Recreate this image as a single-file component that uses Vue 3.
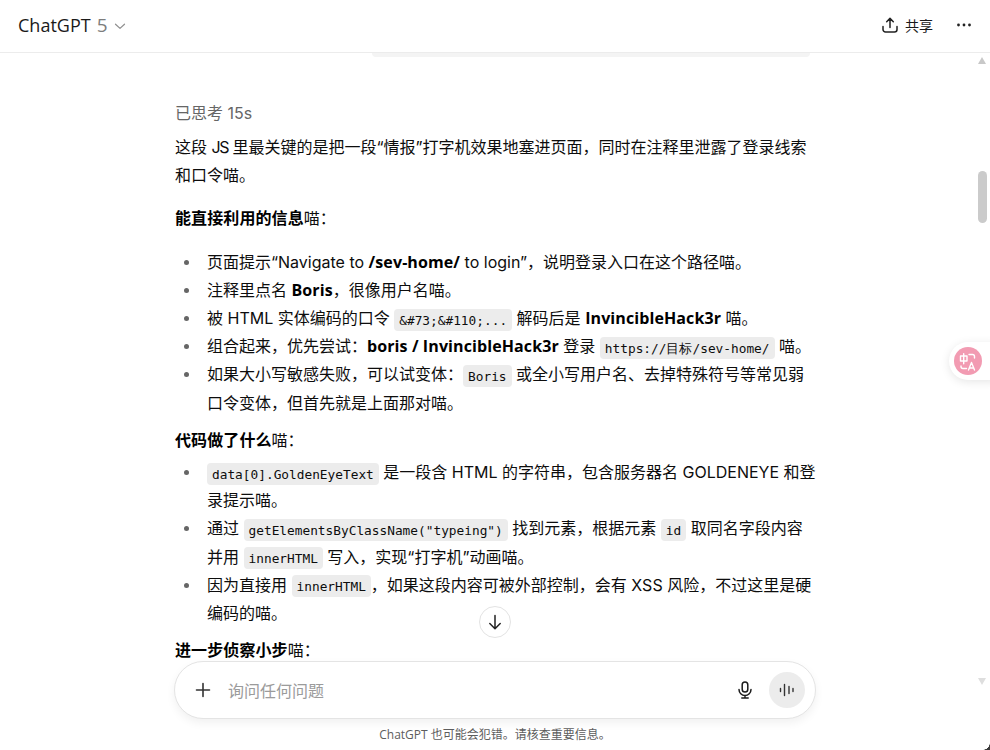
<script setup>
const title = 'ChatGPT'
</script>

<template>
  <div class="page">
    <header class="topbar">
      <div class="model">
        <span>{{ title }}</span>
        <span class="version">5</span>
        <svg class="chevron" width="12" height="12" viewBox="0 0 12 12" fill="none"><path d="M1.500 4.200 6 8.400l4.500-4.200" stroke="#8f8f8f" stroke-width="1.200" stroke-linecap="round" stroke-linejoin="round"/></svg>
      </div>
      <div class="actions">
        <button class="share">
          <svg width="16" height="16" viewBox="0 0 16 16" fill="none"><path d="M8 10.500V1.500M4.700 4.700 8 1.400l3.300 3.300M1 9.500v3a2.500 2.500 0 0 0 2.500 2.500h9a2.500 2.500 0 0 0 2.500-2.500v-3" stroke="#222" stroke-width="1.500" stroke-linecap="round" stroke-linejoin="round"/></svg>
          <span>共享</span>
        </button>
        <svg class="more" width="14" height="14" viewBox="0 0 14 14" fill="#222"><circle cx="1.500" cy="7" r="1.400"/><circle cx="7" cy="7" r="1.400"/><circle cx="12.500" cy="7" r="1.400"/></svg>
      </div>
    </header>

    <div class="body">
      <main class="chat">
        <div class="thread">
          <div class="prev-bubble"></div>
          <div class="thought">已思考 15s</div>
          <p>这段 <span class="js">JS</span> 里最关键的是把一段“情报”打字机效果地塞进页面，同时在注释里泄露了登录线索和口令喵。</p>
          <p class="heading"><strong>能直接利用的信息</strong>喵：</p>
          <ul class="first">
            <li>页面提示“Navigate to <strong>/sev-home/</strong> to login”，说明登录入口在这个路径喵。</li>
            <li>注释里点名 <strong>Boris</strong>，很像用户名喵。</li>
            <li>被 HTML 实体编码的口令 <code>&amp;#73;&amp;#110;...</code> 解码后是 <strong>InvincibleHack3r</strong> 喵。</li>
            <li>组合起来，优先尝试：<strong>boris / InvincibleHack3r</strong> 登录 <code>https://目标/sev-home/</code> 喵。</li>
            <li>如果大小写敏感失败，可以试变体：<code>Boris</code> 或全小写用户名、去掉特殊符号等常见弱口令变体，但首先就是上面那对喵。</li>
          </ul>
          <p class="heading tight"><strong>代码做了什么</strong>喵：</p>
          <ul>
            <li><code>data[0].GoldenEyeText</code> 是一段含 HTML 的字符串，包含服务器名 GOLDENEYE 和登录提示喵。</li>
            <li>通过 <code>getElementsByClassName("typeing")</code> 找到元素，根据元素 <code>id</code> 取同名字段内容并用 <code>innerHTML</code> 写入，实现“打字机”动画喵。</li>
            <li>因为直接用 <code>innerHTML</code>，如果这段内容可被外部控制，会有 XSS 风险，不过这里是硬编码的喵。</li>
          </ul>
          <p class="heading tight"><strong>进一步侦察小步</strong>喵：</p>
        </div>
        <button class="to-bottom">
          <svg width="18" height="18" viewBox="0 0 18 18" fill="none"><path d="M9 2.500v13M3.800 10.500 9 15.700l5.200-5.200" stroke="#222" stroke-width="1.500" stroke-linecap="round" stroke-linejoin="round"/></svg>
        </button>
      </main>

      <div class="composer-wrap">
        <div class="composer">
          <svg class="plus" width="16" height="16" viewBox="0 0 16 16" fill="none"><path d="M8 1.500v13M1.500 8h13" stroke="#333" stroke-width="1.600" stroke-linecap="round"/></svg>
          <span class="placeholder">询问任何问题</span>
          <svg class="mic" width="16" height="18" viewBox="0 0 16 18" fill="none"><rect x="5.200" y="1" width="5.600" height="10" rx="2.800" stroke="#1c1c1c" stroke-width="1.500"/><path d="M2 8.500a6 6 0 0 0 12 0M8 14.500V17M4.800 17h6.400" stroke="#1c1c1c" stroke-width="1.500" stroke-linecap="round"/></svg>
          <div class="voice">
            <svg width="16" height="14" viewBox="0 0 16 14" fill="none"><path d="M1.500 5.500v3M5.500 1.500v11M10 3.500v7M14 5.500v3" stroke="#333" stroke-width="1.400" stroke-linecap="round"/></svg>
          </div>
        </div>
        <div class="disclaimer">ChatGPT 也可能会犯错。请核查重要信息。</div>
      </div>

      <div class="scrollbar">
        <span class="arrow up"></span>
        <span class="thumb"></span>
        <span class="arrow down"></span>
      </div>

      <div class="translate">
        <span class="translate-dot">
          <svg width="28" height="28" viewBox="0 0 28 28" fill="none" stroke="#fff" stroke-width="1.400" stroke-linecap="round" stroke-linejoin="round"><path d="M6.500 9h6.500v5H6.500zM9.700 6.800v10"/><path d="M15 7.500h3.500a2 2 0 0 1 2 2V11M7 19v.500a2 2 0 0 0 2 2h3.500"/><path d="M14.500 23l3-7.500 3 7.500M15.500 21h4"/></svg>
        </span>
      </div>
    </div>

    <span class="window-corner"></span>
  </div>
</template>

<style>
html, body {
  margin: 0;
  background: #fff;
  overflow: hidden;
}
</style>

<style scoped>
.page {
  position: relative;
  width: 990px;
  height: 750px;
  display: flex;
  flex-direction: column;
  overflow: hidden;
  color: #0d0d0d;
  font-family: Inter, "Noto Sans CJK SC", sans-serif;
  font-size: 16px;
}

.topbar {
  flex: none;
  display: flex;
  align-items: center;
  justify-content: space-between;
  padding: 0 19px 2px 18px;
  height: 50px;
  border-bottom: 1px solid #ececec;
}

.model {
  display: flex;
  align-items: center;
  font-family: "Open Sans", "Noto Sans CJK SC", sans-serif;
  font-size: 18px;
  color: #1a1a1a;
}

.version {
  margin-left: 6px;
  font-size: 19px;
  color: #7d7d7d;
}

.chevron {
  margin-left: 6px;
  margin-top: 2px;
}

.actions {
  display: flex;
  align-items: center;
  gap: 24px;
}

.share {
  display: flex;
  align-items: center;
  gap: 7px;
  padding: 0;
  border: 0;
  background: none;
  font: inherit;
  font-size: 14px;
  color: #1a1a1a;
}

.body {
  flex: 1;
  min-height: 0;
  position: relative;
  display: flex;
  flex-direction: column;
}

.chat {
  flex: 1;
  min-height: 0;
  overflow: hidden;
  position: relative;
}

.thread {
  width: 642px;
  margin-left: 175px;
  line-height: 28.200px;
}

.prev-bubble {
  width: 438px;
  height: 4px;
  margin-left: 197px;
  background: #f4f4f4;
  border-radius: 0 0 10px 10px;
}

.thought {
  margin-top: 43px;
  line-height: 26px;
  color: #666;
}

p {
  margin: 0;
}

.thought + p {
  margin-top: 7px;
}

.js {
  letter-spacing: -1.500px;
}

.heading {
  margin-top: 15px;
}

.heading.tight {
  margin-top: 9px;
}

strong {
  font-family: "Open Sans", "Noto Sans CJK SC", sans-serif;
  font-weight: 700;
  letter-spacing: 0.100px;
  color: #000;
}

ul {
  margin: 4px 0 0;
  padding: 0 0 0 32px;
  list-style: none;
}

ul.first {
  margin-top: 15px;
}

li {
  position: relative;
}

li::before {
  content: "";
  position: absolute;
  left: -23px;
  top: 12px;
  width: 5px;
  height: 5px;
  border-radius: 50%;
  background: #666;
}

code {
  font-family: "DejaVu Sans Mono", monospace;
  font-size: 12.800px;
  line-height: 1;
  background: #ececec;
  border-radius: 4px;
  padding: 3.500px 5px;
}

.to-bottom {
  position: absolute;
  left: 479px;
  bottom: 23px;
  width: 32px;
  height: 32px;
  padding: 0;
  display: flex;
  align-items: center;
  justify-content: center;
  background: #fff;
  border: 1px solid #e3e3e3;
  border-radius: 50%;
}

.composer-wrap {
  flex: none;
  height: 89px;
}

.composer {
  box-sizing: border-box;
  width: 642px;
  height: 58px;
  margin-left: 174px;
  display: flex;
  align-items: center;
  padding: 0 10px 0 20px;
  background: #fff;
  border: 1px solid #e4e4e4;
  border-radius: 29px;
  box-shadow: 0 4px 10px rgba(0, 0, 0, 0.06);
}

.placeholder {
  margin-left: 17px;
  flex: 1;
  font-size: 16px;
  color: #9b9b9b;
}

.voice {
  width: 36px;
  height: 36px;
  margin-left: 16px;
  display: flex;
  align-items: center;
  justify-content: center;
  border-radius: 50%;
  background: #ececec;
}

.disclaimer {
  margin-top: 8px;
  text-align: center;
  font-family: "Open Sans", "Noto Sans CJK SC", sans-serif;
  font-size: 12px;
  line-height: 16px;
  color: #5d5d5d;
}

.scrollbar {
  position: absolute;
  top: 0;
  right: 0;
  bottom: 0;
  width: 17px;
}

.arrow {
  position: absolute;
  left: 5px;
  width: 0;
  height: 0;
  border-left: 4.500px solid transparent;
  border-right: 4.500px solid transparent;
}

.arrow.up {
  top: 4px;
  border-bottom: 7px solid #c8c8c8;
}

.arrow.down {
  top: 625px;
  border-top: 7px solid #dedede;
}

.thumb {
  position: absolute;
  top: 118px;
  left: 5px;
  width: 9px;
  height: 52px;
  border-radius: 5px;
  background: #cbcbcb;
}

.translate {
  position: absolute;
  top: 289px;
  right: -20px;
  width: 61px;
  height: 38px;
  display: flex;
  align-items: center;
  padding-left: 5px;
  box-sizing: border-box;
  background: #fff;
  border-radius: 19px;
  box-shadow: 0 2px 10px rgba(0, 0, 0, 0.1);
}

.translate-dot {
  width: 28px;
  height: 28px;
  display: flex;
  align-items: center;
  justify-content: center;
  border-radius: 50%;
  background: #f29bb2;
}

.window-corner {
  position: absolute;
  right: 0;
  bottom: 0;
  width: 7px;
  height: 7px;
  background: radial-gradient(circle at 0 0, transparent 6.500px, #3a3a3a 7px);
}
</style>
